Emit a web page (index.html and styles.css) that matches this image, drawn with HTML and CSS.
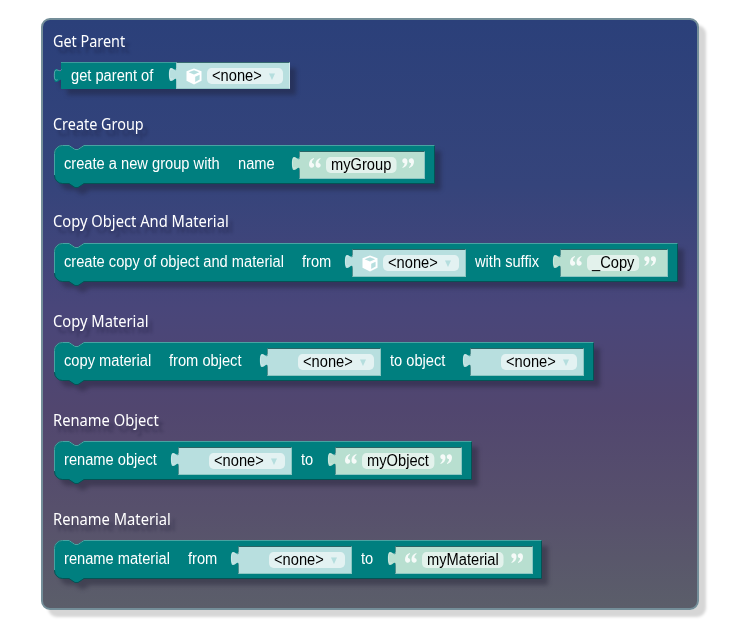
FILE: index.html
```html
<!DOCTYPE html>
<html lang="en">
<head>
<meta charset="utf-8">
<title>Object blocks</title>
<link rel="stylesheet" href="styles.css">
<script src="blocks.js" defer></script>
</head>
<body>
<svg class="defs" width="0" height="0" aria-hidden="true">
  <defs>
    <symbol id="cube" viewBox="0 0 16 17"><path fill="#fff" d="M8 0.5 15.5 3.2V12.7L8 16.5 0.5 12.7V3.2Z"/><path fill="#b7dfdf" d="M2.6 4.3 8 2.3 13.2 4.3 8 6.5ZM9.2 8.7 13.6 6.8V11.6L9.2 13.9Z"/></symbol>
    <symbol id="quote" viewBox="0 0 12 10"><path fill="#fff" fill-opacity=".85" d="M4.8 0C1.8.9 0 3.3 0 6.3 0 8.5 1 9.7 2.7 9.7 4.1 9.7 5.2 8.7 5.2 7.3 5.2 5.9 4.3 5 3 4.9 2.9 3.2 3.6 1.8 5.1.7ZM11.3 0C8.3.9 6.5 3.3 6.5 6.3 6.5 8.5 7.5 9.7 9.2 9.7 10.6 9.7 11.7 8.7 11.7 7.3 11.7 5.9 10.8 5 9.5 4.9 9.4 3.2 10.1 1.8 11.6.7Z"/></symbol>
    <symbol id="tab" viewBox="0 0 9 20"><path d="M9 3C9 13 1 -5 1 10.5S9 8 9 18Z" fill="currentColor"/><path d="M8.5 4.5C7 8.5 1.2 0 1.3 10.5c0 5 1.6 5 3.4 4.3" fill="none" stroke="#fff" stroke-opacity=".35"/></symbol>
  </defs>
</svg>
<main class="panel">
  <section class="group">
    <h2 class="narrow">Get Parent</h2>
    <div class="block output b1">
      <svg class="plug teal"><use href="#tab"/></svg>
      <span class="label">get parent of</span>
      <div class="value object"><svg class="plug"><use href="#tab"/></svg><svg class="cube"><use href="#cube"/></svg><span class="field">&lt;none&gt;<i>▼</i></span></div>
    </div>
  </section>
  <section class="group">
    <h2 class="narrow">Create Group</h2>
    <div class="block b2" data-width="381">
      <span class="label">create a new group with</span>
      <span class="label">name</span>
      <div class="value string"><svg class="plug"><use href="#tab"/></svg><svg class="quote"><use href="#quote"/></svg><span class="field">myGroup</span><svg class="quote close"><use href="#quote"/></svg></div>
    </div>
  </section>
  <section class="group">
    <h2>Copy Object And Material</h2>
    <div class="block b3" data-width="624">
      <span class="label">create copy of object and material</span>
      <span class="label">from</span>
      <div class="value object"><svg class="plug"><use href="#tab"/></svg><svg class="cube"><use href="#cube"/></svg><span class="field">&lt;none&gt;<i>▼</i></span></div>
      <span class="label">with suffix</span>
      <div class="value string"><svg class="plug"><use href="#tab"/></svg><svg class="quote"><use href="#quote"/></svg><span class="field">_Copy</span><svg class="quote close"><use href="#quote"/></svg></div>
    </div>
  </section>
  <section class="group">
    <h2>Copy Material</h2>
    <div class="block b4" data-width="540">
      <span class="label">copy material</span>
      <span class="label">from object</span>
      <div class="value object"><svg class="plug"><use href="#tab"/></svg><span class="field">&lt;none&gt;<i>▼</i></span></div>
      <span class="label">to object</span>
      <div class="value object"><svg class="plug"><use href="#tab"/></svg><span class="field">&lt;none&gt;<i>▼</i></span></div>
    </div>
  </section>
  <section class="group">
    <h2>Rename Object</h2>
    <div class="block b5" data-width="418">
      <span class="label">rename object</span>
      <div class="value object"><svg class="plug"><use href="#tab"/></svg><span class="field">&lt;none&gt;<i>▼</i></span></div>
      <span class="label">to</span>
      <div class="value string"><svg class="plug"><use href="#tab"/></svg><svg class="quote"><use href="#quote"/></svg><span class="field">myObject</span><svg class="quote close"><use href="#quote"/></svg></div>
    </div>
  </section>
  <section class="group">
    <h2>Rename Material</h2>
    <div class="block b6" data-width="488">
      <span class="label">rename material</span>
      <span class="label">from</span>
      <div class="value object"><svg class="plug"><use href="#tab"/></svg><span class="field">&lt;none&gt;<i>▼</i></span></div>
      <span class="label">to</span>
      <div class="value string"><svg class="plug"><use href="#tab"/></svg><svg class="quote"><use href="#quote"/></svg><span class="field">myMaterial</span><svg class="quote close"><use href="#quote"/></svg></div>
    </div>
  </section>
</main>
</body>
</html>
```
FILE: styles.css
```css
* { box-sizing: border-box; }
body { margin: 0; padding: 18px 0 0 41px; height: 640px; background: #fff; font-family: "Liberation Sans", Arial, sans-serif; }
.defs { position: absolute; }
.panel {
  width: 658px; height: 592px; padding: 0 0 0 11px;
  border: 2px solid #748e99; border-radius: 9px;
  background: linear-gradient(#2b407a 0%, #35447b 28%, #49467a 49%, #51466f 66%, #57506c 83%, #5b5e6a 100%);
  box-shadow: 7px 7px 3px #d6d6d6;
  display: grid; grid-template-rows: 83px 97px 100px 99px 99px 1fr;
}
.group { padding-top: 10px; }
h2 {
  margin: 0 0 0 -1px; height: 22px; width: max-content;
  font: 400 16px/22px "Noto Sans", "Open Sans", sans-serif; color: #fff;
  transform-origin: left; transform: scaleX(.92);
  text-shadow: 5px 6px 3px rgba(20, 20, 45, .35);
}
h2.narrow { transform: scaleX(.9); }
.block {
  position: relative; display: grid; align-items: start;
  height: 38px; margin: 10px 0 0 0;
  filter: drop-shadow(6px 6px 2px rgba(25, 25, 45, .38));
}
.block.b3 { margin-top: 11px; }
.block.output {
  height: 27px; width: 229px; margin: 10px 0 0 7px;
  background: #007f7f; border-top: 1px solid #3d9c9c;
}
.shape { position: absolute; left: 0; top: 0; width: 100%; height: 44px; overflow: visible; }
.shape .body { fill: #007f7f; stroke: #045354; stroke-width: 1; }
.shape .light { fill: none; stroke: #48a3a2; stroke-width: 1; }
.label {
  position: relative; color: #fff; font-size: 16px; line-height: 17px;
  padding-top: 10px; white-space: nowrap; transform: scaleX(.916); transform-origin: left;
  width: max-content;
}
.output .label { padding-top: 4px; }
.value {
  position: relative; display: flex; align-items: center; height: 28px; margin-top: 6px;
  border: 1px solid; border-color: #2b6465 #8bc6c2 #8bc6c2 #51908f;
}
.output .value { margin-top: -1px; height: 27px; border-color: #376a70 #d4ecec #99c9c9 #9ccbcb; }
.object { background: #b8dfdf; color: #b8dfdf; padding-left: 30px; }
.string { background: #b8dfd0; color: #b8dfd0; padding-left: 9px; }
.plug { position: absolute; left: -9px; top: 1px; width: 9px; height: 20px; }
.plug.teal { left: -8px; top: 2px; color: #007f7f; }
.cube { position: absolute; left: 9px; top: 5px; width: 16px; height: 17px; }
.quote { width: 12px; height: 10px; margin: -4px 5px 0 0; flex: none; }
.quote.close { transform: rotate(180deg); margin: -4px 0 0 6px; }
.field {
  flex: none; height: 16px; padding: 0 5.5px; border-radius: 5px; background: rgba(255, 255, 255, .6);
  color: #000; font-size: 16px; line-height: 16px; white-space: nowrap;
  transform: scaleX(.916); transform-origin: left;
}
.string .field { margin-right: -6.5px; }
.object .field { width: 83px; margin-right: -7px; }
.field i { font: normal 8.5px/10px "DejaVu Sans", sans-serif; color: #b5dede; margin-left: 8px; vertical-align: 2px; }
.b1 { grid-template-columns: 105px 114px; padding-left: 10px; }
.b2 { grid-template-columns: 174px 61px 126px; padding-left: 10px; }
.b3 { grid-template-columns: 238px 50px 114px 9px 85px 108px; padding-left: 10px; }
.b3 > :nth-child(5) { grid-column: 5; }
.b3 > :nth-child(6) { grid-column: 6; }
.b4 { grid-template-columns: 105px 98px 114px 9px 80px 114px; padding-left: 10px; }
.b4 > :nth-child(5) { grid-column: 5; }
.b4 > :nth-child(6) { grid-column: 6; }
.b5 { grid-template-columns: 114px 114px 9px 34px 127px; padding-left: 10px; }
.b5 > :nth-child(4) { grid-column: 4; }
.b5 > :nth-child(5) { grid-column: 5; }
.b6 { grid-template-columns: 124px 50px 114px 9px 34px 138px; padding-left: 10px; }
.b6 > :nth-child(5) { grid-column: 5; }
.b6 > :nth-child(6) { grid-column: 6; }
```
FILE: blocks.js
```js
// Draws the statement outline (top notch, bottom connector) behind each block.
document.querySelectorAll('.block[data-width]').forEach(function (block) {
  var w = Number(block.dataset.width);
  var top = 'M.5 30V8.5A8 8 0 0 1 8.5 .5H15l6 4h3l6-4H' + (w - 0.5);
  block.style.width = w + 'px';
  block.insertAdjacentHTML('afterbegin',
    '<svg class="shape"><path class="body" d="' + top +
    'V38.5H30l-6 4h-3l-6-4H8.5A8 8 0 0 1 .5 30.5Z"/><path class="light" d="' + top + '"/></svg>');
});
```
